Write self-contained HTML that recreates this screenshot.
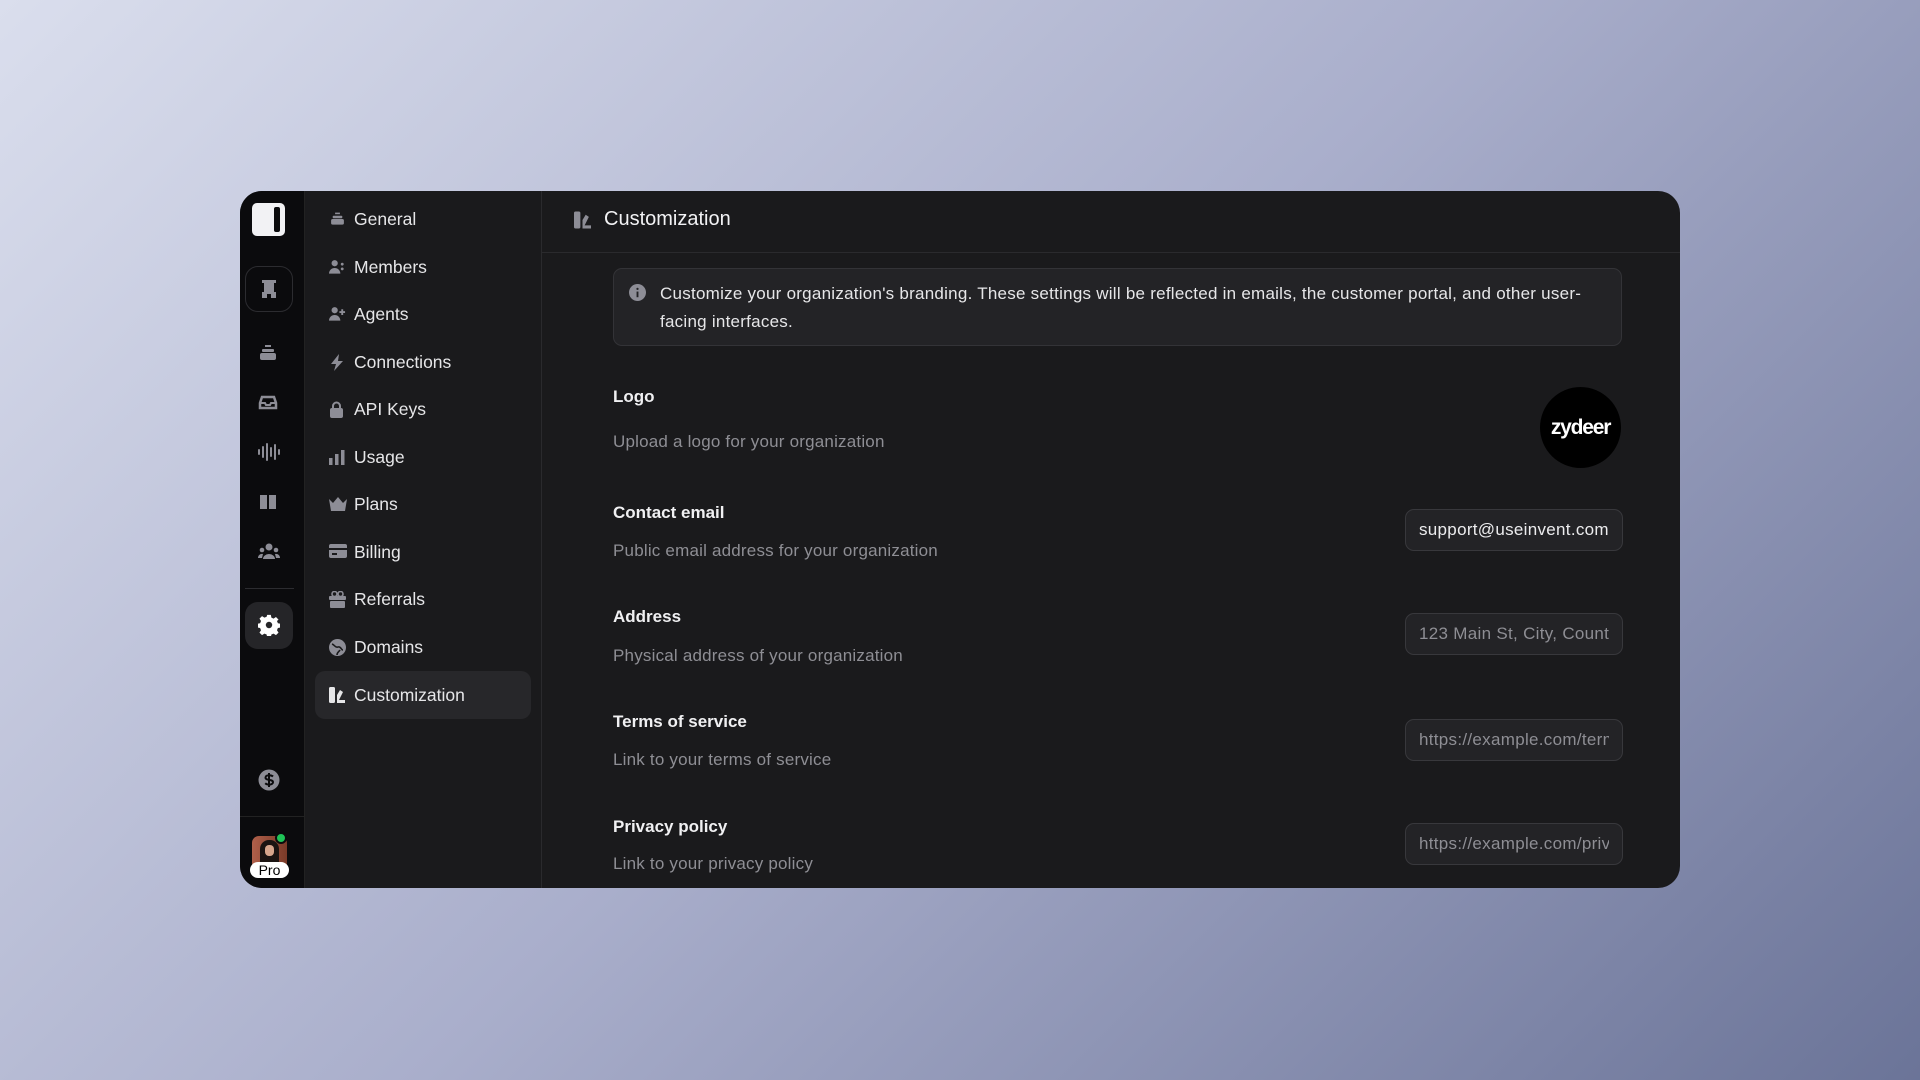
<!DOCTYPE html>
<html><head><meta charset="utf-8"><style>
*{margin:0;padding:0;box-sizing:border-box}
body{width:1920px;height:1080px;overflow:hidden;font-family:"Liberation Sans",sans-serif;background:linear-gradient(135deg,#dadeed 0%,#a9aecb 50%,#6b7498 100%);position:relative}
.win{position:absolute;left:240px;top:191px;width:1440px;height:697px;border-radius:22px;overflow:hidden;background:#1a1a1c}
.rail{position:absolute;left:0;top:0;width:65px;height:100%;background:#0b0b0d;border-right:1px solid #222}
.nav{position:absolute;left:65px;top:0;width:237px;height:100%;background:#1a1a1c;border-right:1px solid #2a2a2d}
.main{position:absolute;left:302px;top:0;right:0;height:100%}
.ni{position:absolute;left:10px;width:216px;height:48px;color:#e6e6e8;font-size:17.5px}
.ni svg{position:absolute;left:14px;top:16px}
.ni span{position:absolute;left:39px;top:14px}
.ni.act{background:#27272a;border-radius:10px}
.ri{position:absolute;left:18px}
.lbl{position:absolute;left:71px;color:#f0f0f2;font-size:17px;font-weight:bold}
.dsc{position:absolute;left:71px;color:#8e8e94;font-size:17px;letter-spacing:.2px}
.inp{position:absolute;left:863px;width:218px;height:42px;border:1px solid #38383c;background:#232326;border-radius:9px;color:#8e8e94;font-size:17px;line-height:40px;padding:0 13px;white-space:nowrap;overflow:hidden}
.inp div{overflow:hidden}
</style></head><body>
<div class="win">
<div class="rail">
 <div style="position:absolute;left:12px;top:12px;width:33px;height:33px;border-radius:5px;background:#f2f2f4"><div style="position:absolute;right:5px;top:4px;width:6px;height:25px;background:#0b0b0d;border-radius:2px"></div></div>
 <div style="position:absolute;left:5px;top:75px;width:48px;height:46px;border:1px solid #2c2c30;border-radius:13px"></div>
 <svg style="position:absolute;left:22px;top:89px" width="14" height="18" viewBox="0 0 14 18" fill="#8d8d96"><rect x="0" y="0" width="14" height="3"/><rect x="2" y="3" width="10" height="9"/><rect x="0" y="12" width="5" height="6"/><rect x="9" y="12" width="5" height="6"/><rect x="5" y="12" width="4" height="2"/></svg>
 <svg class="ri" style="top:152px" width="20" height="20" viewBox="0 0 20 20" fill="#8d8d96"><rect x="7" y="2" width="6" height="2"/><rect x="4" y="6" width="12" height="3" rx="1"/><rect x="2" y="10" width="16" height="7" rx="2"/></svg>
 <svg class="ri" style="top:202px" width="20" height="20" viewBox="0 0 20 20" fill="none" stroke="#8d8d96" stroke-width="2.5"><path d="M2 10 L4 4 H16 L18 10 V15 H2 Z"/><path d="M2 10h5l1 2h4l1-2h5" stroke-width="2"/></svg>
 <svg class="ri" style="top:251px" width="22" height="20" viewBox="0 0 22 20" stroke="#8d8d96" stroke-width="2" stroke-linecap="round"><path d="M1 8v4M5 5v10M9 2v16M13 6v8M17 3v14M21 8v4"/></svg>
 <svg class="ri" style="top:301px" width="20" height="20" viewBox="0 0 20 20" fill="#8d8d96"><path d="M2 3h7v14H2zM11 3h7v14h-7z"/></svg>
 <svg class="ri" style="top:351px" width="22" height="20" viewBox="0 0 22 20" fill="#8d8d96"><circle cx="11" cy="5" r="3.5"/><circle cx="4" cy="8" r="2.3"/><circle cx="18" cy="8" r="2.3"/><path d="M5 17a6 5 0 0 1 12 0z"/><path d="M0 16a4 4 0 0 1 5-4l-1 4zM22 16a4 4 0 0 0-5-4l1 4z"/></svg>
 <div style="position:absolute;left:5px;top:397px;width:49px;height:1px;background:#2c2c30"></div>
 <div style="position:absolute;left:5px;top:411px;width:48px;height:47px;border-radius:13px;background:#252528"></div>
 <svg style="position:absolute;left:18px;top:423px" width="22" height="22" viewBox="0 0 24 24" fill="#fff"><path d="M10 1h4l.6 3 2.4 1 2.6-1.7 2.8 2.8L20.7 7.7l1 2.4 3 .6v4l-3 .6-1 2.4 1.7 2.6-2.8 2.8-2.6-1.7-2.4 1-.6 3h-4l-.6-3-2.4-1-2.6 1.7-2.8-2.8 1.7-2.6-1-2.4-3-.6v-4l3-.6 1-2.4L1.6 5.1 4.4 2.3 7 4l2.4-1z"/><circle cx="12" cy="12" r="3.5" fill="#252528"/></svg>
 <svg style="position:absolute;left:18px;top:578px" width="22" height="22" viewBox="0 0 22 22"><circle cx="11" cy="11" r="10.5" fill="#8d8d96"/><path d="M15 7.5c-1-1-2.5-1.3-4-1.3-2 0-3.5 1-3.5 2.4 0 3.2 7.5 1.4 7.5 4.6 0 1.4-1.6 2.5-3.8 2.5-1.6 0-3-.5-4-1.4M11 4v14" stroke="#0b0b0d" stroke-width="2" fill="none"/></svg>
 <div style="position:absolute;left:0;top:625px;width:65px;height:1px;background:#222"></div>
 <div style="position:absolute;left:12px;top:645px;width:35px;height:34px;border-radius:7px;overflow:hidden;background:linear-gradient(90deg,#b0604a,#7a3a28)"><div style="position:absolute;left:8px;top:4px;width:19px;height:32px;border-radius:9px 9px 0 0;background:#1b1412"></div><div style="position:absolute;left:13px;top:9px;width:9px;height:11px;border-radius:4px;background:#d6a58c"></div></div>
 <div style="position:absolute;left:35px;top:641px;width:12px;height:12px;border-radius:50%;background:#1fc457;border:2px solid #0b0b0d"></div>
 <div style="position:absolute;left:10px;top:671px;width:39px;height:16px;border-radius:8px;background:#fff;color:#000;font-size:14px;line-height:16px;text-align:center">Pro</div>
</div>
<div class="nav">
 <div class="ni" style="top:4px"><svg width="17" height="16" viewBox="0 0 20 20" fill="#8d8d96"><rect x="7" y="2" width="6" height="2"/><rect x="4" y="6" width="12" height="3" rx="1"/><rect x="2" y="10" width="16" height="7" rx="2"/></svg><span>General</span></div>
 <div class="ni" style="top:52px"><svg width="17" height="16" viewBox="0 0 18 16" fill="#8d8d96"><circle cx="6" cy="4" r="3.3"/><path d="M0 15a6 6 0 0 1 12 0z"/><circle cx="14" cy="5" r="1.5"/><circle cx="14" cy="10" r="1.5"/></svg><span>Members</span></div>
 <div class="ni" style="top:99px"><svg width="17" height="16" viewBox="0 0 18 16" fill="#8d8d96"><circle cx="6" cy="4" r="3.3"/><path d="M0 15a6 6 0 0 1 12 0z"/><path d="M13 3h2v2h2v2h-2v2h-2V7h-2V5h2z"/></svg><span>Agents</span></div>
 <div class="ni" style="top:147px"><svg width="16" height="17" viewBox="0 0 16 17" fill="#8d8d96"><path d="M10 0 2 10h5l-2 7 9-10H9z"/></svg><span>Connections</span></div>
 <div class="ni" style="top:194px"><svg width="15" height="17" viewBox="0 0 15 17" fill="#8d8d96"><path d="M3 8V5a4.5 4.5 0 0 1 9 0v3h-2V5a2.5 2.5 0 0 0-5 0v3z"/><rect x="1" y="7" width="13" height="10" rx="2"/></svg><span>API Keys</span></div>
 <div class="ni" style="top:242px"><svg width="16" height="16" viewBox="0 0 16 16" fill="#8d8d96"><rect x="0" y="9" width="3.5" height="7"/><rect x="6" y="5" width="3.5" height="11"/><rect x="12" y="1" width="3.5" height="15"/></svg><span>Usage</span></div>
 <div class="ni" style="top:289px"><svg width="18" height="15" viewBox="0 0 18 15" fill="#8d8d96"><path d="M0 3l4 4 5-6 5 6 4-4-2 12H2z"/></svg><span>Plans</span></div>
 <div class="ni" style="top:337px"><svg width="18" height="14" viewBox="0 0 18 14" fill="#8d8d96"><rect x="0" y="0" width="18" height="14" rx="2"/><rect x="0" y="4" width="18" height="2" fill="#1a1a1c"/><rect x="3" y="9" width="5" height="2" fill="#1a1a1c"/></svg><span>Billing</span></div>
 <div class="ni" style="top:384px"><svg width="17" height="17" viewBox="0 0 17 17" fill="#8d8d96"><circle cx="5.5" cy="3" r="2.5" fill="none" stroke="#8d8d96" stroke-width="1.6"/><circle cx="11.5" cy="3" r="2.5" fill="none" stroke="#8d8d96" stroke-width="1.6"/><rect x="0" y="5" width="17" height="4" rx="1"/><rect x="1" y="10" width="15" height="7" rx="1"/></svg><span>Referrals</span></div>
 <div class="ni" style="top:432px"><svg width="17" height="17" viewBox="0 0 17 17"><circle cx="8.5" cy="8.5" r="8.5" fill="#8d8d96"/><path d="M3 5c3 1 3 4 6 3s3 3 5 3M8 16c0-3 2-3 3-5" stroke="#1a1a1c" stroke-width="1.6" fill="none"/></svg><span>Domains</span></div>
 <div class="ni act" style="top:480px"><svg width="16" height="16" viewBox="0 0 16 16" fill="#e6e6e8"><rect x="0" y="0" width="6" height="16" rx="1.5"/><path d="M8 16V8l3-5 3 2-4 8h6v3z"/></svg><span>Customization</span></div>
</div>
<div class="main">
 <svg style="position:absolute;left:32px;top:20px" width="17" height="18" viewBox="0 0 16 16" fill="#8d8d96"><rect x="0" y="0" width="6" height="16" rx="1.5"/><path d="M8 16V8l3-5 3 2-4 8h6v3z"/></svg>
 <div style="position:absolute;left:62px;top:17px;color:#f2f2f4;font-size:20px">Customization</div>
 <div style="position:absolute;left:0;top:61px;right:0;height:1px;background:#2a2a2d"></div>
 <div style="position:absolute;left:71px;top:77px;width:1009px;height:78px;border:1px solid #333337;background:#232326;border-radius:9px">
  <svg style="position:absolute;left:15px;top:15px" width="17" height="17" viewBox="0 0 18 18"><circle cx="9" cy="9" r="9" fill="#8d8d96"/><rect x="8" y="8" width="2" height="6" fill="#232326"/><circle cx="9" cy="5.2" r="1.2" fill="#232326"/></svg>
  <div style="position:absolute;left:46px;top:11px;width:945px;color:#e6e6e8;font-size:17px;letter-spacing:.25px;line-height:28px">Customize your organization's branding. These settings will be reflected in emails, the customer portal, and other user-facing interfaces.</div>
 </div>
 <div class="lbl" style="top:196px">Logo</div>
 <div class="dsc" style="top:241px">Upload a logo for your organization</div>
 <div style="position:absolute;left:998px;top:196px;width:81px;height:81px;border-radius:50%;background:#000;color:#fff;font-weight:bold;font-size:21px;letter-spacing:-1.2px;line-height:81px;text-align:center">zydeer</div>
 <div class="lbl" style="top:312px">Contact email</div>
 <div class="dsc" style="top:350px">Public email address for your organization</div>
 <div class="inp" style="top:318px;color:#ececee;letter-spacing:.3px"><div>support@useinvent.com</div></div>
 <div class="lbl" style="top:416px">Address</div>
 <div class="dsc" style="top:455px">Physical address of your organization</div>
 <div class="inp" style="top:422px;letter-spacing:.3px"><div>123 Main St, City, Country</div></div>
 <div class="lbl" style="top:521px">Terms of service</div>
 <div class="dsc" style="top:559px">Link to your terms of service</div>
 <div class="inp" style="top:528px;letter-spacing:.3px"><div>https://example.com/terms</div></div>
 <div class="lbl" style="top:626px">Privacy policy</div>
 <div class="dsc" style="top:663px">Link to your privacy policy</div>
 <div class="inp" style="top:632px;letter-spacing:.3px"><div>https://example.com/privacy</div></div>
</div>
</div>
</body></html>
